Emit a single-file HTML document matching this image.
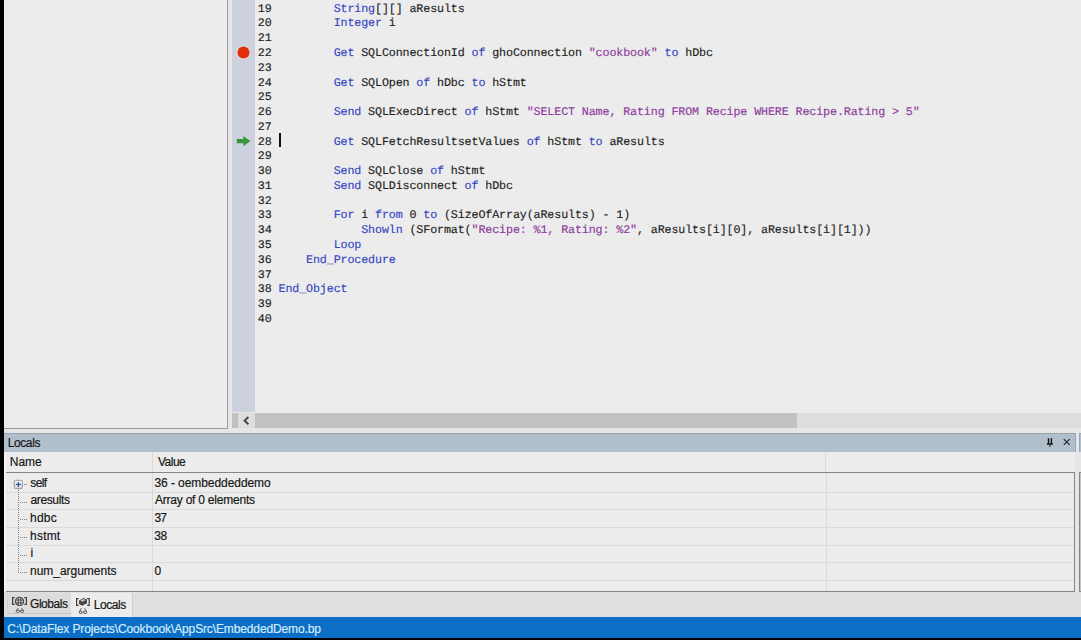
<!DOCTYPE html>
<html><head><meta charset="utf-8"><title>IDE</title>
<style>
html,body{margin:0;padding:0;}
body{width:1081px;height:640px;background:#000;position:relative;overflow:hidden;font-family:"Liberation Sans",sans-serif;}
div,pre,svg{position:absolute;margin:0;}
#frame{left:4.2px;top:0;width:1077px;height:617px;background:#e6e6e6;}
#left{left:4.2px;top:0;width:222.9px;height:427.6px;background:#ececec;border-right:1.2px solid #9a9a9a;border-bottom:1.2px solid #9a9a9a;}
#gutter{left:231.6px;top:0;width:23.3px;height:412px;background:#cdd1de;}
#editor{left:254.9px;top:0;width:827px;height:412.6px;background:#ececec;}
#sb{left:231.6px;top:413px;width:850px;height:15px;background:#dddddd;}
#sbl{left:231.6px;top:413px;width:6.4px;height:15px;background:#c0c0c0;}
#sbthumb{left:255px;top:413px;width:541.5px;height:15px;background:#c1c1c1;}
.ln{left:257.8px;font-family:"Liberation Mono",monospace;font-size:11.7px;line-height:15px;height:15px;text-rendering:geometricPrecision;letter-spacing:-0.1202px;color:#1e1e1e;white-space:pre;-webkit-text-stroke:0.15px;}
.k{color:#3646c2;}
.s{color:#8c3c9c;}
#cursor{left:278.9px;top:133.2px;width:2px;height:14.3px;background:#111;}
#bp{left:237.5px;top:46.5px;width:11.4px;height:11.4px;border-radius:50%;background:#e2300e;box-shadow:0 0 0 0.5px #cc2e12, 0 0 1.2px 1.3px rgba(255,226,218,0.85);}
#lochdr{left:4.2px;top:433px;width:1071.6px;height:18.8px;background:#b1bfcd;border-top:1px solid #98a4b0;border-right:1.4px solid #9aa6b2;box-sizing:border-box;}
#lochdr2{left:1079.2px;top:433px;width:3px;height:18.8px;background:#b1bfcd;border-top:1px solid #98a4b0;border-left:1px solid #9aa6b2;box-sizing:border-box;}
#colhdr{left:4.2px;top:451.8px;width:1071.3px;height:20.4px;background:#ececec;}
#tbl{left:6.2px;top:471.7px;width:1069.3px;height:120px;background:#ececec;border-top:1.2px solid #858585;border-right:1.3px solid #858585;border-bottom:1.2px solid #858585;box-sizing:border-box;}
#tbl2{left:1079.2px;top:471.7px;width:3px;height:120px;background:#c4c4c4;border-top:1.2px solid #858585;border-left:1.2px solid #858585;border-bottom:1.2px solid #858585;box-sizing:border-box;}
#lightstrip{left:4.2px;top:451.8px;width:2px;height:140px;background:#f3f3f3;}
.sep{left:6.2px;width:1068px;height:1px;background:#dadada;}
.vd{width:1px;background:#d8d8d8;}
.t{font-size:11.6px;line-height:14px;color:#161616;white-space:pre;letter-spacing:-0.3px;-webkit-text-stroke:0.18px;}
.nm{left:30.8px;}
.vl{left:155px;}
#tabs{left:4.2px;top:592px;width:1077px;height:25px;background:#dfdfdf;}
#tabG{left:6.6px;top:593.8px;width:64px;height:20.6px;background:#dcdcdc;border-bottom:1px solid #c6c6c6;border-left:1px solid #d2d2d2;box-sizing:border-box;}
#tabL{left:70.6px;top:592.6px;width:62.8px;height:24px;background:#ececec;border-right:1px solid #cfcfcf;box-sizing:border-box;}
#status{left:4.2px;top:617px;width:1077px;height:21.4px;background:#0b6fc7;}
#stxt{left:7.3px;top:621.5px;font-size:11.6px;line-height:14px;color:#d4ecfb;white-space:pre;letter-spacing:-0.3px;}
</style></head><body>
<div id="frame"></div>
<div id="left"></div>
<div id="gutter"></div>
<div id="editor"></div>
<div id="sb"></div><div id="sbl"></div><div id="sbthumb"></div>
<svg style="left:242px;top:415px" width="8" height="11" viewBox="0 0 8 11"><path d="M6.4 2.1 L2.6 5.7 L6.4 9.3" fill="none" stroke="#484848" stroke-width="2"/></svg>
<pre class="ln" style="top:1.63px">19         <span class="k">String</span>[][] aResults</pre>
<pre class="ln" style="top:16.41px">20         <span class="k">Integer</span> i</pre>
<pre class="ln" style="top:31.18px">21</pre>
<pre class="ln" style="top:45.96px">22         <span class="k">Get</span> SQLConnectionId <span class="k">of</span> ghoConnection <span class="s">&quot;cookbook&quot;</span> <span class="k">to</span> hDbc</pre>
<pre class="ln" style="top:60.73px">23</pre>
<pre class="ln" style="top:75.51px">24         <span class="k">Get</span> SQLOpen <span class="k">of</span> hDbc <span class="k">to</span> hStmt</pre>
<pre class="ln" style="top:90.29px">25</pre>
<pre class="ln" style="top:105.06px">26         <span class="k">Send</span> SQLExecDirect <span class="k">of</span> hStmt <span class="s">&quot;SELECT Name, Rating FROM Recipe WHERE Recipe.Rating &gt; 5&quot;</span></pre>
<pre class="ln" style="top:119.84px">27</pre>
<pre class="ln" style="top:134.61px">28         <span class="k">Get</span> SQLFetchResultsetValues <span class="k">of</span> hStmt <span class="k">to</span> aResults</pre>
<pre class="ln" style="top:149.39px">29</pre>
<pre class="ln" style="top:164.17px">30         <span class="k">Send</span> SQLClose <span class="k">of</span> hStmt</pre>
<pre class="ln" style="top:178.94px">31         <span class="k">Send</span> SQLDisconnect <span class="k">of</span> hDbc</pre>
<pre class="ln" style="top:193.72px">32</pre>
<pre class="ln" style="top:208.49px">33         <span class="k">For</span> i <span class="k">from</span> 0 <span class="k">to</span> (SizeOfArray(aResults) - 1)</pre>
<pre class="ln" style="top:223.27px">34             <span class="k">Showln</span> (SFormat(<span class="s">&quot;Recipe: %1, Rating: %2&quot;</span>, aResults[i][0], aResults[i][1]))</pre>
<pre class="ln" style="top:238.05px">35         <span class="k">Loop</span></pre>
<pre class="ln" style="top:252.82px">36     <span class="k">End_Procedure</span></pre>
<pre class="ln" style="top:267.60px">37</pre>
<pre class="ln" style="top:282.37px">38 <span class="k">End_Object</span></pre>
<pre class="ln" style="top:297.15px">39</pre>
<pre class="ln" style="top:311.93px">40</pre>
<div id="cursor"></div>
<div id="bp"></div>
<svg style="left:236px;top:135px" width="16" height="12" viewBox="0 0 16 12"><path d="M0.8 3.9 H7.3 V1 L14.4 6.1 L7.3 11.2 V8.3 H0.8 Z" fill="#3a973c"/></svg>

<div id="lochdr"></div><div id="lochdr2"></div>
<div class="t" style="left:7.64px;top:436.24px;font-size:12px;letter-spacing:-0.378px;">Locals</div>
<svg style="left:1045px;top:436px" width="10" height="12" viewBox="0 0 10 12"><path d="M3.5 2.2 V8 M6.4 2.2 V8" fill="none" stroke="#0c0c0c" stroke-width="1.4"/><path d="M2 8 H7.9" fill="none" stroke="#111" stroke-width="1.5"/><path d="M4.95 8 V10.9" stroke="#222" stroke-width="1" fill="none"/></svg>
<svg style="left:1062px;top:437px" width="10" height="10" viewBox="0 0 10 10"><path d="M1.8 2.1 L7.7 7.9 M7.7 2.1 L1.8 7.9" fill="none" stroke="#2c2c2c" stroke-width="1.3"/></svg>

<div id="colhdr"></div>
<div id="lightstrip"></div>
<div class="vd" style="left:151.5px;top:452px;height:20px;background:#d9d9d9"></div>
<div class="vd" style="left:825.2px;top:452px;height:20px;background:#d9d9d9"></div>
<div class="t" style="left:9.72px;top:454.64px;font-size:12px;letter-spacing:0.001px;">Name</div>
<div class="t" style="left:158.03px;top:454.64px;font-size:12px;letter-spacing:-0.521px;">Value</div>
<div id="tbl"></div><div id="tbl2"></div>
<div class="vd" style="left:151.8px;top:473px;height:118px;"></div>
<div class="vd" style="left:826px;top:473px;height:118px;"></div>
<div class="sep" style="top:491.6px"></div>
<div class="sep" style="top:509.2px"></div>
<div class="sep" style="top:526.8px"></div>
<div class="sep" style="top:544.5px"></div>
<div class="sep" style="top:562.4px"></div>
<div class="sep" style="top:580.0px"></div>
<div class="t" style="left:30.28px;top:475.84px;font-size:12px;letter-spacing:-0.577px;">self</div>
<div class="t" style="left:30.44px;top:493.44px;font-size:12px;letter-spacing:-0.354px;">aresults</div>
<div class="t" style="left:30.04px;top:511.04px;font-size:12px;letter-spacing:0.215px;">hdbc</div>
<div class="t" style="left:30.10px;top:528.64px;font-size:12px;letter-spacing:0.194px;">hstmt</div>
<div class="t" style="left:30.58px;top:546.24px;font-size:12px;letter-spacing:0.000px;">i</div>
<div class="t" style="left:30.06px;top:563.84px;font-size:12px;letter-spacing:-0.027px;">num_arguments</div>
<div class="t" style="left:154.43px;top:475.84px;font-size:12px;letter-spacing:-0.066px;">36 - oembeddeddemo</div>
<div class="t" style="left:154.97px;top:493.44px;font-size:12px;letter-spacing:-0.223px;">Array of 0 elements</div>
<div class="t" style="left:154.43px;top:511.04px;font-size:12px;letter-spacing:-0.750px;">37</div>
<div class="t" style="left:154.33px;top:528.64px;font-size:12px;letter-spacing:-0.496px;">38</div>
<div class="t" style="left:154.55px;top:563.84px;font-size:12px;letter-spacing:0.000px;">0</div>
<!-- tree -->
<svg style="left:10px;top:476px" width="20" height="100" viewBox="0 0 20 100" shape-rendering="crispEdges">
<defs><linearGradient id="bx" x1="0" y1="0" x2="0" y2="1"><stop offset="0" stop-color="#f8f8f8"/><stop offset="1" stop-color="#d6d6d6"/></linearGradient></defs>
<path d="M8.5 14 V97" fill="none" stroke="#808080" stroke-width="1" stroke-dasharray="1 1"/>
<path d="M14 8.5 H17 M10 26.5 H17 M10 43.5 H17 M10 61.5 H17 M10 79.5 H17 M10 96.5 H17" fill="none" stroke="#808080" stroke-width="1" stroke-dasharray="1 1"/>
<g shape-rendering="auto"><rect x="4.3" y="4.3" width="8.1" height="8.3" rx="1.2" fill="url(#bx)" stroke="#8e8e8e" stroke-width="0.9"/>
<path d="M5.9 8.45 H10.9 M8.4 5.95 V10.95" stroke="#2f4fa2" stroke-width="1.2" fill="none"/></g>
</svg>

<div id="tabs"></div>
<div id="tabG"></div><div id="tabL"></div>
<div class="t" style="left:30.09px;top:596.54px;font-size:12px;letter-spacing:-0.481px;">Globals</div>
<div class="t" style="left:93.65px;top:597.54px;font-size:12px;letter-spacing:-0.428px;">Locals</div>
<!-- globals icon -->
<svg style="left:10px;top:595px" width="20" height="19" viewBox="0 0 20 19">
<path d="M4.6 2.6 H2.6 V9.3 H4.6 M14.4 2.6 H16.4 V9.3 H14.4" fill="none" stroke="#3c3c3c" stroke-width="1.2"/>
<circle cx="9.5" cy="6.4" r="4.1" fill="#cfcfcf" stroke="#484848" stroke-width="1.1"/>
<path d="M8.2 2.6 V10.2 M10.8 2.6 V10.2 M5.6 5 H13.4 M5.6 7.8 H13.4" stroke="#4c4c4c" stroke-width="1" fill="none"/>
<ellipse cx="7.7" cy="16.2" rx="1.55" ry="1.25" fill="#e6e6e6" stroke="#4a4a4a" stroke-width="0.9"/>
<ellipse cx="12.1" cy="16.2" rx="1.55" ry="1.25" fill="#e6e6e6" stroke="#4a4a4a" stroke-width="0.9"/>
<path d="M6.2 15.8 L8.4 13.1 M13.6 15.8 L11.4 13.1 M9.2 15.9 H10.6" stroke="#4a4a4a" stroke-width="0.9" fill="none"/>
</svg>
<!-- locals icon -->
<svg style="left:74px;top:595px" width="20" height="20" viewBox="0 0 20 20">
<path d="M4.6 3.7 H2.6 V10.3 H4.6 M13.2 3.7 H15.2 V10.3 H13.2" fill="none" stroke="#3c3c3c" stroke-width="1.2"/>
<path d="M5 5.4 L9.6 3.1 L13 4.6 V8.2 L8.2 10.8 L5 9 Z" fill="#484848"/>
<path d="M6.3 5.5 L9.6 3.9 L11.8 4.9 L8.4 6.7 Z" fill="#c4c4c4"/>
<ellipse cx="6.8" cy="17.3" rx="1.55" ry="1.25" fill="#ececec" stroke="#4a4a4a" stroke-width="0.9"/>
<ellipse cx="11.2" cy="17.3" rx="1.55" ry="1.25" fill="#ececec" stroke="#4a4a4a" stroke-width="0.9"/>
<path d="M5.3 16.8 L7.4 13.2 M12.7 16.8 L10.4 13.2 M8.3 17 H9.7" stroke="#4a4a4a" stroke-width="0.9" fill="none"/>
</svg>

<div id="status"></div>
<div class="t" style="left:7.28px;top:621.64px;font-size:12px;letter-spacing:-0.128px;color:#d4ecfb;">C:\DataFlex Projects\Cookbook\AppSrc\EmbeddedDemo.bp</div>
</body></html>
